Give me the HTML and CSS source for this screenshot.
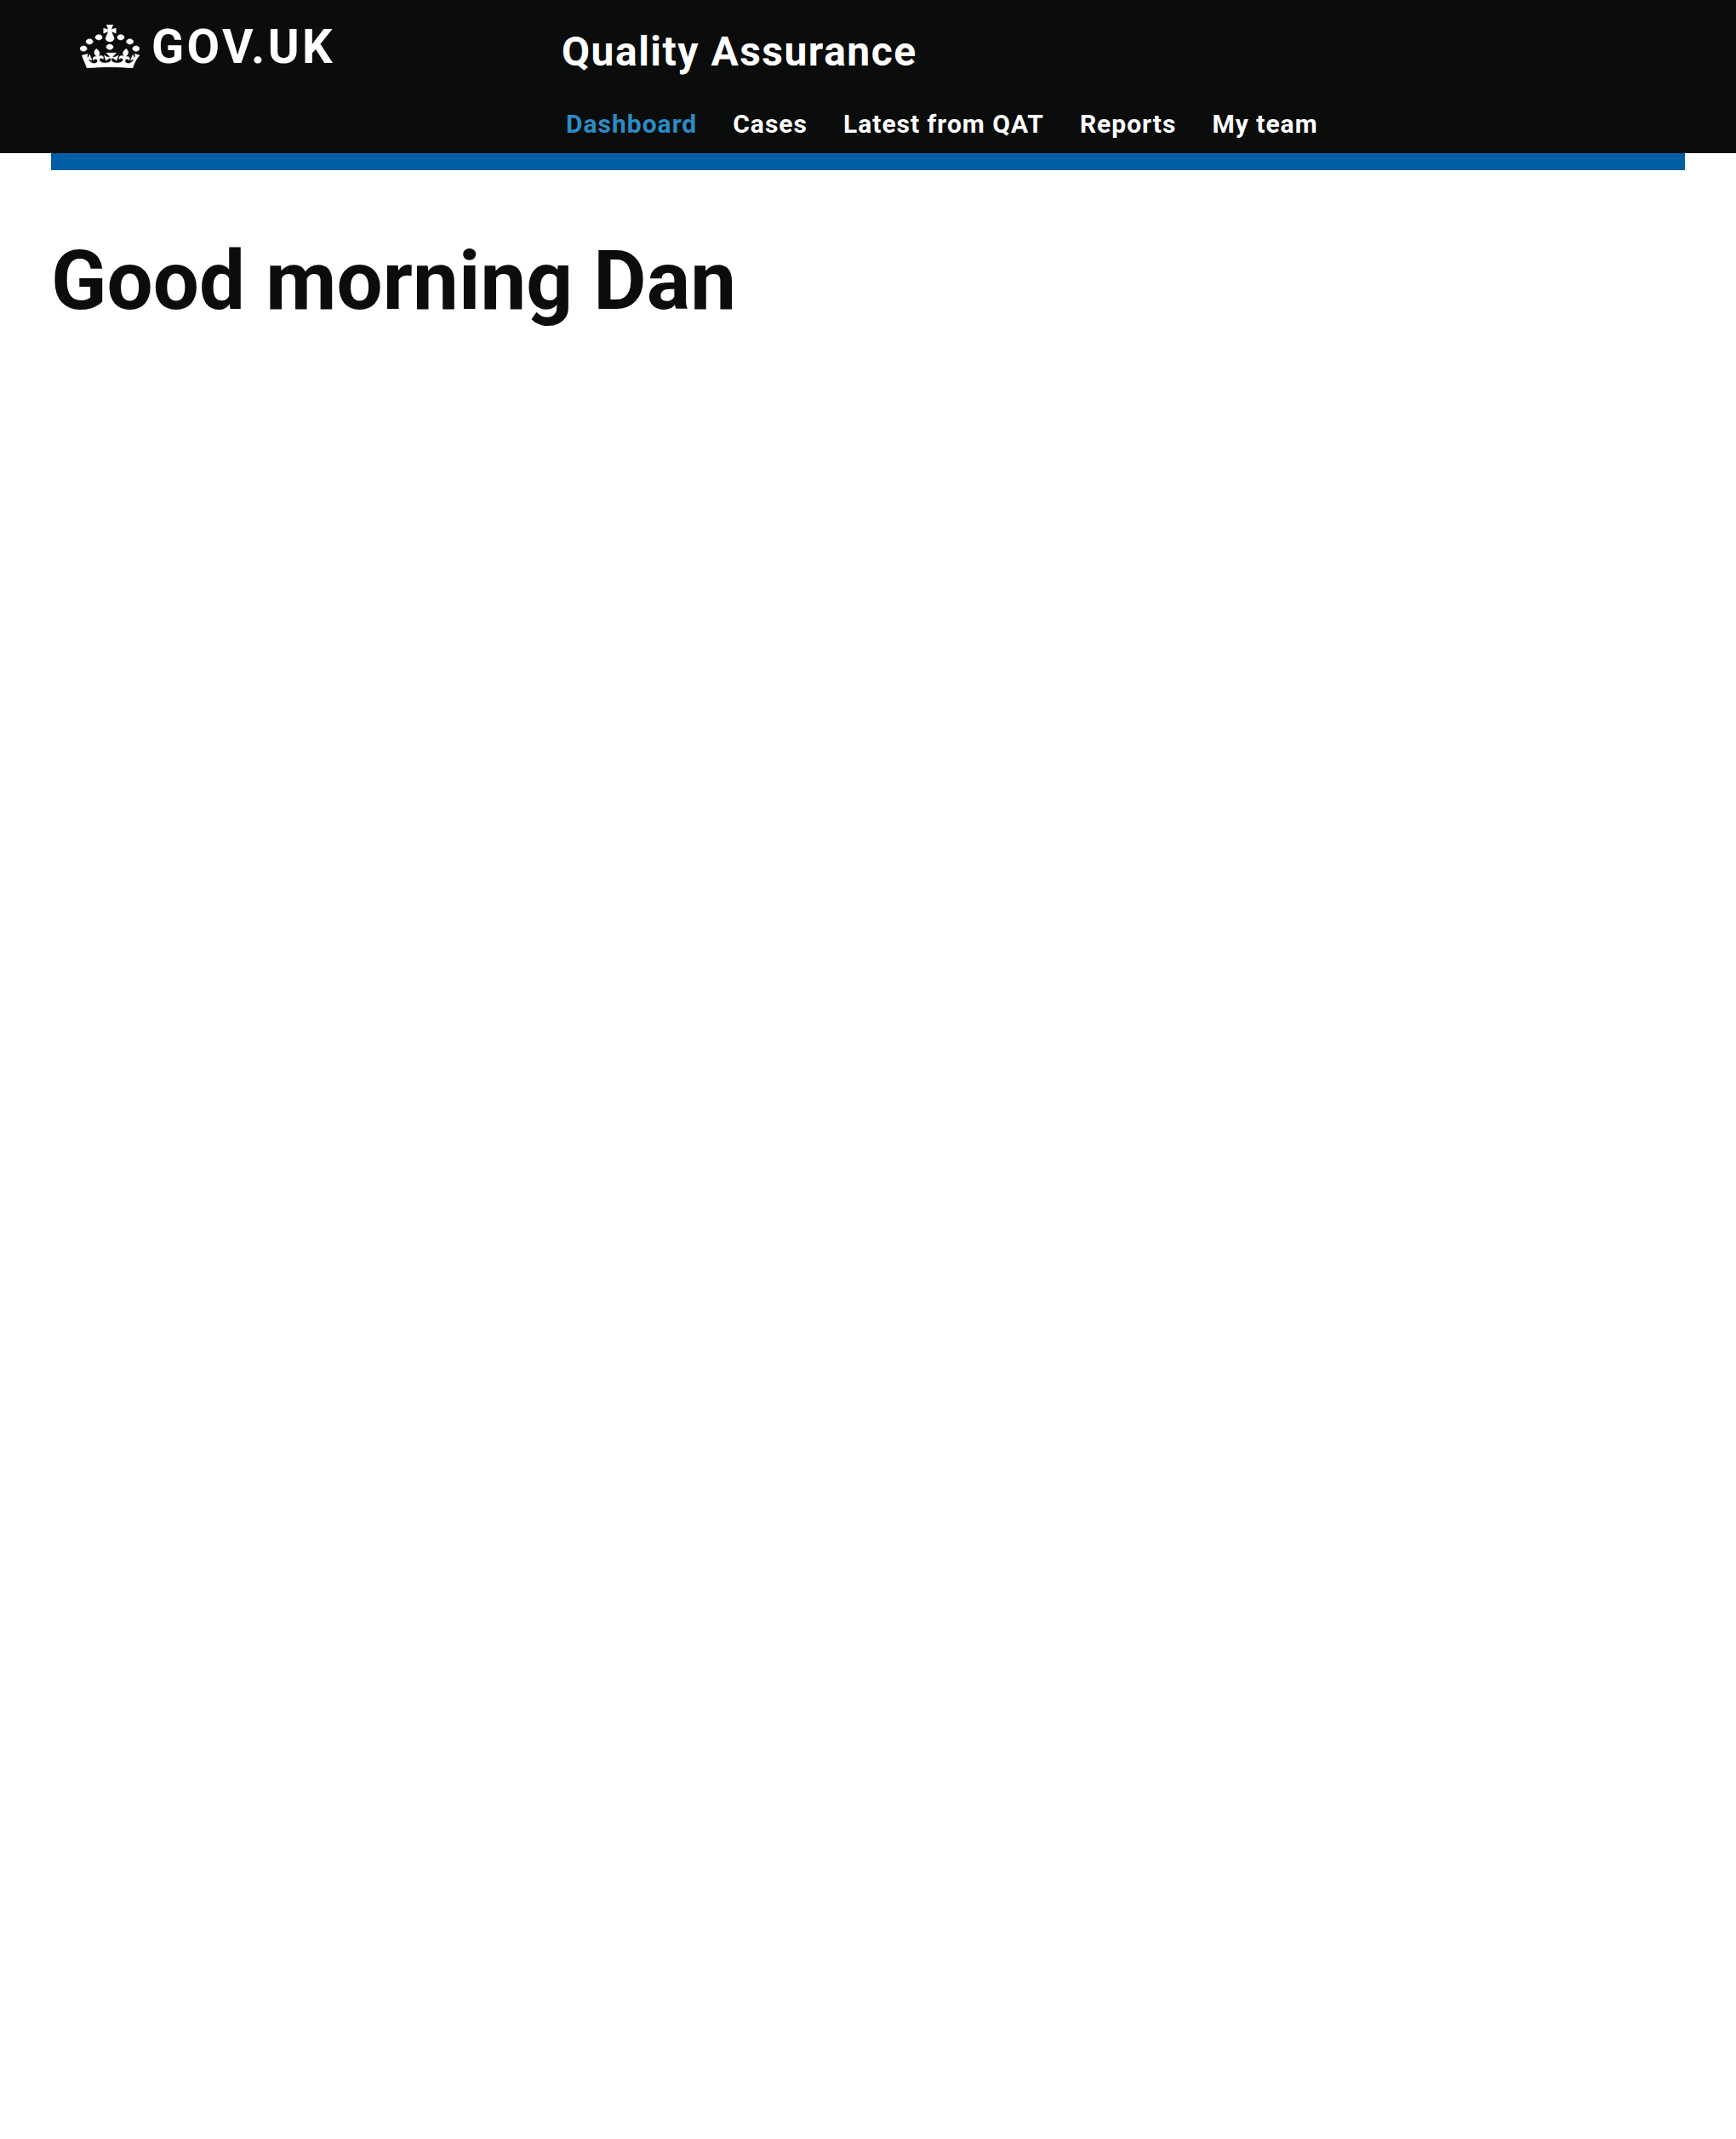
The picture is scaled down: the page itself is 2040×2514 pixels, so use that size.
FILE: index.html
```html
<!DOCTYPE html>
<html lang="en">
<head>
  <meta charset="UTF-8">
  <title>Quality Assurance</title>
  <link rel="stylesheet" href="styles.css">
</head>
<body>
  <header class="header">
    <a class="logo" href="#">
      <svg class="crown" viewBox="0 0 32 30" preserveAspectRatio="none" aria-hidden="true">
        <path fill="currentColor" stroke="currentColor" stroke-width="0.3" fill-rule="evenodd" d="M22.6 10.4c-1 .4-2-.1-2.4-1-.4-.9.1-2 1-2.4.9-.4 2 .1 2.4 1s-.1 2-1 2.4m-5.9 6.7c-.9.4-2-.1-2.4-1-.4-.9.1-2 1-2.4.9-.4 2 .1 2.4 1s-.1 2-1 2.4m10.8-3.7c-1 .4-2-.1-2.4-1-.4-.9.1-2 1-2.4.9-.4 2 .1 2.4 1s0 2-1 2.4m3.3 4.8c-1 .4-2-.1-2.4-1-.4-.9.1-2 1-2.4.9-.4 2 .1 2.4 1s-.1 2-1 2.4M17 4.7l2.3 1.2V2.5l-2.3.7-.2-.2.9-3h-3.4l.9 3-.2.2c-.1.1-2.3-.7-2.3-.7v3.4L15 4.7c.1.1.1.2.2.2l-1.3 4c-.1.2-.1.4-.1.6 0 1.1.8 2 1.9 2.2h.7c1-.2 1.9-1.1 1.9-2.2 0-.2 0-.4-.1-.6l-1.3-4c-.1-.1.1-.2.1-.2m-7.6 5.7c.9.4 2-.1 2.4-1 .4-.9-.1-2-1-2.4-.9-.4-2 .1-2.4 1s0 2 1 2.4m-5 3c.9.4 2-.1 2.4-1 .4-.9-.1-2-1-2.4-.9-.4-2 .1-2.4 1s.1 2 1 2.4m-3.2 4.8c.9.4 2-.1 2.4-1 .4-.9-.1-2-1-2.4-.9-.4-2 .1-2.4 1s0 2 1 2.4m14.8 11c4.4 0 8.6.3 12.3.8 1.1-4.5 2.4-7 3.7-8.8l-2.5-.9c.2 1.3.3 1.9 0 2.7-.4-.4-.8-1.1-1.1-2.3l-1.2 4c.7-.5 1.3-.8 2-.9-1.1 2.5-2.6 3.1-3.5 3-1.1-.2-1.7-1.2-1.5-2.1.3-1.2 1.5-1.5 2.1-.1 1.1-2.3-.8-3-2-2.3 1.9-1.9 2.1-3.5.6-5.6-2.1 1.6-2.1 3.2-1.2 5.5-1.2-1.4-3.2-.6-2.5 1.6.9-1.4 2.1-.5 1.9.8-.2 1.1-1.7 2.1-3.5 1.9-2.7-.2-2.9-2.1-2.9-3.6.7-.1 1.9.5 2.9 1.9l1-3.6c-1.1 1.1-2.1 1.4-3.2 1.4.4-1.2 2.1-3 2.1-3h-5.4s1.7 1.9 2.1 3c-1.1 0-2.1-.2-3.2-1.4l1 3.6c1-1.4 2.2-2 2.9-1.9-.1 1.5-.2 3.4-2.9 3.6-1.9.2-3.4-.8-3.5-1.9-.2-1.3 1-2.2 1.9-.8.7-2.3-1.2-3-2.5-1.6.9-2.2.9-3.9-1.2-5.5-1.5 2-1.3 3.7.6 5.6-1.2-.7-3.1 0-2 2.3.6-1.4 1.8-1.1 2.1.1.2.9-.3 1.9-1.5 2.1-.9.2-2.4-.5-3.5-3 .6 0 1.2.3 2 .9l-1.2-4c-.3 1.1-.7 1.9-1.1 2.3-.3-.8-.2-1.4 0-2.7l-2.9.9C1.3 23 2.6 25.5 3.7 30c3.7-.5 7.9-.8 12.3-.8"/>
      </svg>
      <span class="logo-text">GOV.UK</span>
    </a>
    <div class="service">
      <a class="service-name" href="#">Quality Assurance</a>
      <nav class="nav">
        <a class="nav-link active" href="#">Dashboard</a>
        <a class="nav-link" href="#">Cases</a>
        <a class="nav-link" href="#">Latest from QAT</a>
        <a class="nav-link" href="#">Reports</a>
        <a class="nav-link" href="#">My team</a>
      </nav>
    </div>
  </header>

  <div class="container">
    <div class="blue-bar"></div>
    <main class="main">
      <h1 class="title">Good morning Dan</h1>
    </main>
  </div>
</body>
</html>
```

FILE: styles.css
```css
html, body {
  margin: 0;
  padding: 0;
}
body {
  font-family: Roboto, Arial, sans-serif;
  background: #fff;
  color: #0b0c0c;
  min-height: 2514px;
}
a {
  text-decoration: none;
  color: #fff;
}
.header {
  display: flex;
  height: 180px;
  background: #0b0c0c;
  box-sizing: border-box;
  padding-left: 94px;
}
.logo {
  display: flex;
  align-items: center;
  gap: 14px;
  width: 566px;
  height: 109px;
  flex-shrink: 0;
}
.crown {
  width: 70px;
  height: 51px;
  margin-bottom: 1px;
}
.logo-text {
  font-size: 56px;
  font-weight: 700;
  letter-spacing: 3.4px;
  line-height: 1;
}
.service {
  padding-top: 29px;
}
.service-name {
  display: block;
  font-size: 48px;
  font-weight: 700;
  line-height: 64px;
  letter-spacing: 1.5px;
}
.nav {
  display: flex;
  gap: 42px;
  margin-top: 33px;
  padding-left: 5px;
}
.nav-link {
  font-size: 30px;
  font-weight: 700;
  line-height: 40px;
  letter-spacing: 1px;
}
.nav-link.active {
  color: #2b8cc4;
}
.container {
  margin: 0 60px;
}
.blue-bar {
  height: 20px;
  background: #005ea5;
}
.title {
  margin: 0;
  padding-top: 82px;
  font-size: 96px;
  line-height: 1;
  font-weight: 700;
  letter-spacing: 0.1px;
}
```
